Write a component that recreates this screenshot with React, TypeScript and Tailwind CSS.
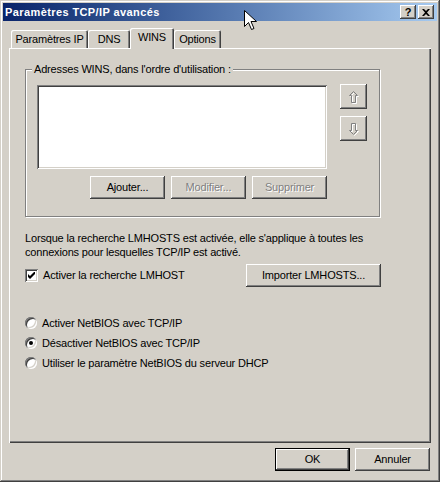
import React from 'react'

const raised =
  'bg-[#d4d0c8] shadow-[inset_-1px_-1px_#404040,inset_1px_1px_#fff,inset_-2px_-2px_#808080,inset_2px_2px_#d4d0c8]'
const sunken =
  'shadow-[inset_1px_1px_#808080,inset_-1px_-1px_#fff,inset_2px_2px_#404040,inset_-2px_-2px_#d4d0c8]'
const disabledText = 'text-[#808080] [text-shadow:1px_1px_0_#fff]'

function Button({
  label,
  width,
  disabled,
  isDefault,
}: {
  label: string
  width: string
  disabled?: boolean
  isDefault?: boolean
}) {
  if (isDefault) {
    return (
      <div className={`${width} h-[23px] border border-black flex`}>
        <div className={`flex-1 flex items-center justify-center ${raised}`}>{label}</div>
      </div>
    )
  }
  return (
    <div className={`${width} h-[23px] flex items-center justify-center ${raised} ${disabled ? disabledText : ''}`}>
      {label}
    </div>
  )
}

function Tab({ label, width, active }: { label: string; width: string; active?: boolean }) {
  if (active) {
    return (
      <div
        className={`${width} h-[21px] -mb-[1px] relative z-10 bg-[#d4d0c8] rounded-t-[2px] flex justify-center pt-[3px] shadow-[inset_1px_1px_#fff,inset_-1px_0_#404040,inset_-2px_0_#808080]`}
      >
        {label}
      </div>
    )
  }
  return (
    <div
      className={`${width} h-[18px] bg-[#d4d0c8] rounded-t-[2px] flex justify-center pt-[3px] shadow-[inset_1px_1px_#fff,inset_-1px_0_#404040,inset_-2px_0_#808080]`}
    >
      {label}
    </div>
  )
}

function ArrowButton({ down }: { down?: boolean }) {
  const pts = down
    ? '3,1 7,1 7,8 9,8 5,12 1,8 3,8'
    : '5,1 9,5 7,5 7,12 3,12 3,5 1,5'
  return (
    <div className={`w-[27px] h-[25px] flex items-center justify-center ${raised}`}>
      <svg width="11" height="14" viewBox="0 0 11 14">
        <polygon points={pts} transform="translate(1.5 1.5)" fill="none" stroke="#fff" strokeWidth="1" />
        <polygon points={pts} transform="translate(0.5 0.5)" fill="none" stroke="#808080" strokeWidth="1" />
      </svg>
    </div>
  )
}

function Radio({ label, checked }: { label: string; checked?: boolean }) {
  return (
    <div className="h-[20px] flex items-center">
      <div className={`w-[12px] h-[12px] rounded-full bg-white flex items-center justify-center ${sunken}`}>
        {checked && <div className="w-[4px] h-[4px] rounded-full bg-black" />}
      </div>
      <span className="ml-[5px]">{label}</span>
    </div>
  )
}

export default function App() {
  return (
    <div className="w-[440px] h-[482px] relative bg-[#d4d0c8] text-black text-[11px] leading-[13px] tracking-[-0.17px] font-['Liberation_Sans',Arial,sans-serif] shadow-[inset_-1px_-1px_#404040,inset_1px_1px_#d4d0c8,inset_-2px_-2px_#808080,inset_2px_2px_#fff] p-[3px] select-none">
      {/* Title bar */}
      <div className="h-[18px] flex items-center bg-gradient-to-r from-[#0a246a] to-[#a6caf0] pl-[2px] pr-[3px]">
        <span className="text-white font-bold text-[11px] tracking-[0.4px]">Paramètres TCP/IP avancés</span>
        <div className="ml-auto flex gap-[2px]">
          <div className={`w-[16px] h-[14px] flex items-center justify-center font-bold text-[11px] leading-none ${raised}`}>?</div>
          <div className={`w-[16px] h-[14px] flex items-center justify-center ${raised}`}>
            <svg width="8" height="7" viewBox="0 0 8 7">
              <path d="M0 0h2l2 2 2-2h2L5 3.5 8 7H6L4 5 2 7H0l3-3.5z" fill="#000" />
            </svg>
          </div>
        </div>
      </div>

      <div className="px-[6px] pt-[7px]">
        {/* Tabs */}
        <div className="h-[20px] flex items-end pl-[2px]">
          <Tab label="Paramètres IP" width="w-[77px]" />
          <Tab label="DNS" width="w-[42px]" />
          <Tab label="WINS" width="w-[44px]" active />
          <Tab label="Options" width="w-[47px]" />
        </div>

        {/* Tab panel */}
        <div className="h-[395px] bg-[#d4d0c8] shadow-[inset_1px_1px_#fff,inset_-1px_-1px_#404040,inset_-2px_-2px_#808080] pl-[16px] pt-[21px]">
          {/* Group box */}
          <div className="relative w-[355px] h-[148px] border border-[#808080] shadow-[1px_1px_0_#fff,inset_1px_1px_0_#fff] pl-[11px] pt-[14px]">
            <span className="absolute left-[6px] -top-[7px] px-[2px] bg-[#d4d0c8]">
              Adresses WINS, dans l'ordre d'utilisation :
            </span>
            <div className="flex items-start">
              <div className={`w-[290px] h-[84px] mt-[1px] bg-white ${sunken}`} />
              <div className="ml-[13px] flex flex-col gap-[7px]">
                <ArrowButton />
                <ArrowButton down />
              </div>
            </div>
            <div className="w-[290px] mt-[7px] flex justify-end gap-[6px]">
              <Button label="Ajouter..." width="w-[75px]" />
              <Button label="Modifier..." width="w-[75px]" disabled />
              <Button label="Supprimer" width="w-[75px]" disabled />
            </div>
          </div>

          <p className="mt-[14px] leading-[14px] w-[360px]">
            Lorsque la recherche LMHOSTS est activée, elle s'applique à toutes les
            <br />
            connexions pour lesquelles TCP/IP est activé.
          </p>

          <div className="mt-[5px] w-[356px] h-[23px] flex items-center justify-between">
            <div className="flex items-center">
              <div className={`w-[13px] h-[13px] bg-white flex items-center justify-center ${sunken}`}>
                <svg width="7" height="7" viewBox="0 0 7 7">
                  <path d="M0 2v3l2 2 5-5V-1L2 4z" fill="#000" />
                </svg>
              </div>
              <span className="ml-[5px]">Activer la recherche LMHOST</span>
            </div>
            <Button label="Importer LMHOSTS..." width="w-[135px]" />
          </div>

          <div className="mt-[26px] flex flex-col">
            <Radio label="Activer NetBIOS avec TCP/IP" />
            <Radio label="Désactiver NetBIOS avec TCP/IP" checked />
            <Radio label="Utiliser le paramètre NetBIOS du serveur DHCP" />
          </div>
        </div>

        {/* Dialog buttons */}
        <div className="mt-[5px] flex justify-end gap-[5px] pr-[1px]">
          <Button label="OK" width="w-[75px]" isDefault />
          <Button label="Annuler" width="w-[75px]" />
        </div>
      </div>

      {/* Mouse pointer */}
      <svg className="absolute left-[244px] top-[10px]" width="13" height="21" viewBox="0 0 13 21">
        <path d="M0.5 0.5v16l4-4 3 7 2.5-1-3-7h5.5z" fill="#fff" stroke="#000" strokeWidth="1" />
      </svg>
    </div>
  )
}
